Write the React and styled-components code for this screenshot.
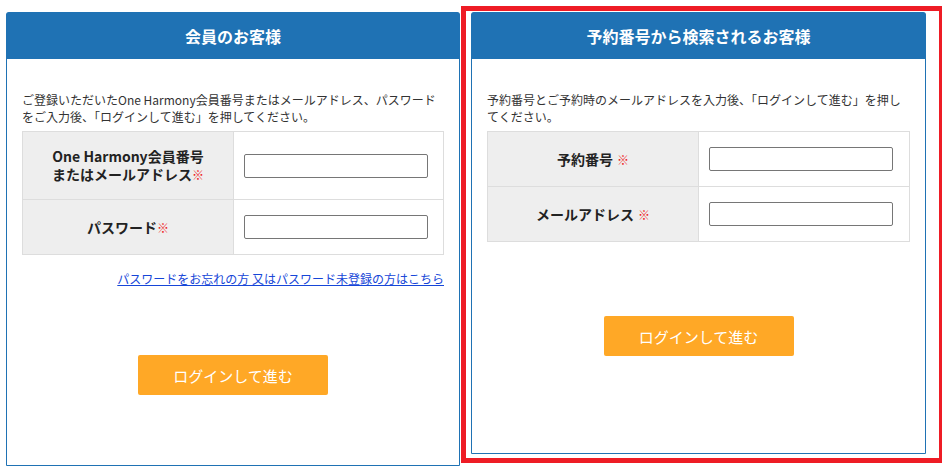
import React from 'react';
import styled, { createGlobalStyle } from 'styled-components';

const GlobalStyle = createGlobalStyle`
  body {
    margin: 0;
    background: #fff;
    font-family: "Noto Sans CJK JP", "Noto Sans", sans-serif;
    color: #333;
  }
`;

const Page = styled.div`
  display: flex;
  align-items: flex-start;
  gap: 11px;
  padding: 12px 0 0 6px;
`;

const Highlight = styled.div`
  position: relative;
`;

// red annotation frame drawn over the right card
const Frame = styled.div`
  position: absolute;
  left: -10px;
  top: -6px;
  right: -18px;
  bottom: -9px;
  border: 5px solid #ee1c25;
  pointer-events: none;
`;

const Card = styled.div`
  box-sizing: border-box;
  width: ${(p) => p.$width}px;
  height: ${(p) => p.$height}px;
  border: 1px solid #1f72b4;
  border-radius: 4px 4px 0 0;
  background: #fff;
  display: flex;
  flex-direction: column;
`;

const CardHeader = styled.div`
  height: 46px;
  background: #1f72b4;
  color: #fff;
  display: flex;
  align-items: center;
  justify-content: center;
  font-size: 16px;
  font-weight: bold;
  border-radius: 3px 3px 0 0;
  margin: -1px -1px 0;
  padding-top: 1px;
`;

const CardBody = styled.div`
  padding: 32px 15px 0;
  display: flex;
  flex-direction: column;
`;

const Lead = styled.p`
  margin: 0 0 6px;
  font-size: 12px;
  line-height: 17px;
  color: #333;
`;

const FormTable = styled.table`
  width: 100%;
  border-collapse: collapse;
  border: 1px solid #ddd;
`;

const Label = styled.th`
  width: 211px;
  box-sizing: border-box;
  background: #eeeeee;
  border: 1px solid #ddd;
  padding: 15px 6px;
  font-size: 14px;
  line-height: 18px;
  font-weight: bold;
  color: #222;
  text-align: center;
`;

const Field = styled.td`
  border: 1px solid #ddd;
  padding: 15px 10px;
  vertical-align: middle;
`;

const Required = styled.span`
  color: #ee1c25;
  font-size: 12px;
  font-weight: normal;
  margin-left: ${(p) => (p.$spaced ? '4px' : '0')};
`;

const TextInput = styled.input`
  display: block;
  box-sizing: border-box;
  width: 184px;
  height: 24px;
  border: 1px solid #767676;
  border-radius: 2px;
  padding: 0 4px;
  font-size: 13px;
`;

const LinkRow = styled.div`
  margin-top: 15px;
  text-align: right;
  font-size: 12px;
  line-height: 17px;
`;

const TextLink = styled.a`
  color: #1646d8;
  text-decoration: underline;
`;

const LoginButton = styled.button`
  align-self: center;
  margin-top: ${(p) => p.$gap}px;
  width: 190px;
  height: 40px;
  border: none;
  border-radius: 2px;
  background: #ffa826;
  color: #fff;
  font-family: inherit;
  font-size: 15px;
  cursor: pointer;
`;

function MemberLogin() {
  return (
    <Card $width={454} $height={454}>
      <CardHeader>会員のお客様</CardHeader>
      <CardBody>
        <Lead>
          ご登録いただいたOne Harmony会員番号またはメールアドレス、パスワード
          <br />
          をご入力後、「ログインして進む」を押してください。
        </Lead>
        <FormTable>
          <tbody>
            <tr>
              <Label>
                One Harmony会員番号
                <br />
                またはメールアドレス<Required>※</Required>
              </Label>
              <Field>
                <TextInput type="text" />
              </Field>
            </tr>
            <tr>
              <Label>
                パスワード<Required>※</Required>
              </Label>
              <Field>
                <TextInput type="password" />
              </Field>
            </tr>
          </tbody>
        </FormTable>
        <LinkRow>
          <TextLink href="#">パスワードをお忘れの方 又はパスワード未登録の方はこちら</TextLink>
        </LinkRow>
        <LoginButton $gap={68}>ログインして進む</LoginButton>
      </CardBody>
    </Card>
  );
}

function ReservationLogin() {
  return (
    <Card $width={455} $height={442}>
      <CardHeader>予約番号から検索されるお客様</CardHeader>
      <CardBody>
        <Lead>
          予約番号とご予約時のメールアドレスを入力後、「ログインして進む」を押し
          <br />
          てください。
        </Lead>
        <FormTable>
          <tbody>
            <tr>
              <Label>
                予約番号<Required $spaced>※</Required>
              </Label>
              <Field>
                <TextInput type="text" />
              </Field>
            </tr>
            <tr>
              <Label>
                メールアドレス<Required $spaced>※</Required>
              </Label>
              <Field>
                <TextInput type="email" />
              </Field>
            </tr>
          </tbody>
        </FormTable>
        <LoginButton $gap={74}>ログインして進む</LoginButton>
      </CardBody>
    </Card>
  );
}

export default function App() {
  return (
    <>
      <GlobalStyle />
      <Page>
        <MemberLogin />
        <Highlight>
          <ReservationLogin />
          <Frame />
        </Highlight>
      </Page>
    </>
  );
}
